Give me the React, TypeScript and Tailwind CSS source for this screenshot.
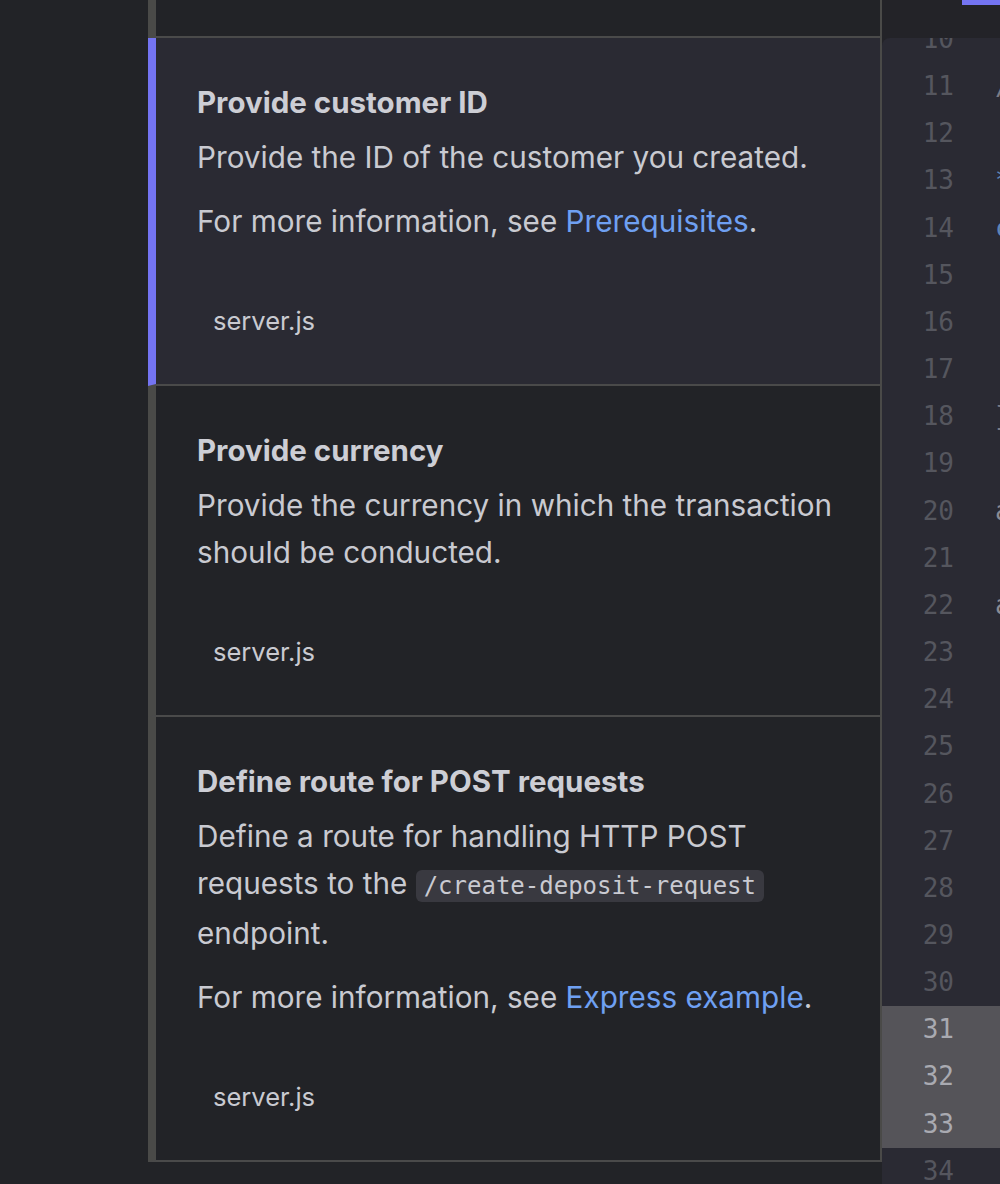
import React from "react";

type Step = {
  title: string;
  body: React.ReactNode[];
  active?: boolean;
};

const steps: Step[] = [
  {
    title: "Provide customer ID",
    active: true,
    body: [
      "Provide the ID of the customer you created.",
      <>
        For more information, see{" "}
        <span className="text-[#6fa0f2]">Prerequisites</span>.
      </>,
    ],
  },
  {
    title: "Provide currency",
    body: ["Provide the currency in which the transaction should be conducted."],
  },
  {
    title: "Define route for POST requests",
    body: [
      <>
        Define a route for handling HTTP POST requests to the{" "}
        <code className="rounded-md bg-[#393940] px-2 py-[2px] font-['DejaVu_Sans_Mono',monospace] text-[24px] text-[#c9cad1]">
          /create-deposit-request
        </code>{" "}
        endpoint.
      </>,
      <>
        For more information, see{" "}
        <span className="text-[#6fa0f2]">Express example</span>.
      </>,
    ],
  },
];

// first visible char of each code line only, the rest is clipped
const codeLines: { n: number; text: string; color: string }[] = [
  { n: 10, text: "", color: "" },
  { n: 11, text: "// Replace with your customer ID", color: "text-[#7a7b85]" },
  { n: 12, text: "", color: "" },
  { n: 13, text: "* customerId", color: "text-[#5f84b8]" },
  { n: 14, text: "const currency = 'USD';", color: "text-[#5f84b8]" },
  { n: 15, text: "", color: "" },
  { n: 16, text: "", color: "" },
  { n: 17, text: "", color: "" },
  { n: 18, text: "});", color: "text-[#7a7b85]" },
  { n: 19, text: "", color: "" },
  { n: 20, text: "app.use(express.json());", color: "text-[#8a8b94]" },
  { n: 21, text: "", color: "" },
  { n: 22, text: "app.post('/create-deposit-request')", color: "text-[#8a8b94]" },
  { n: 23, text: "", color: "" },
  { n: 24, text: "", color: "" },
  { n: 25, text: "", color: "" },
  { n: 26, text: "", color: "" },
  { n: 27, text: "", color: "" },
  { n: 28, text: "", color: "" },
  { n: 29, text: "", color: "" },
  { n: 30, text: "", color: "" },
  { n: 31, text: "", color: "" },
  { n: 32, text: "", color: "" },
  { n: 33, text: "", color: "" },
  { n: 34, text: "", color: "" },
];

function StepCard({ step }: { step: Step }) {
  return (
    <div
      className={
        step.active
          ? "border-l-8 border-b-2 border-l-[#7474f2] border-b-[#4a4a4a] bg-[#2a2a33] px-[41px] pt-[44px] pb-[43px]"
          : "border-l-8 border-b-2 border-l-[#4a4a48] border-b-[#4a4a4a] bg-[#222327] px-[41px] pt-[44px] pb-[43px]"
      }
    >
      <h2 className="text-[29.5px] font-bold leading-[40px] text-[#cdced5]">
        {step.title}
      </h2>

      <div className="mt-3 flex flex-col gap-[17px] text-[29.7px] leading-[47px] text-[#c9cad1]">
        {step.body.map((p, i) => (
          <p key={i}>{p}</p>
        ))}
      </div>

      <div className="mt-[56px] pl-4 text-[25.5px] leading-[40px] text-[#c9cad1]">
        server.js
      </div>
    </div>
  );
}

export default function App() {
  return (
    <main className="flex min-h-[1184px] bg-[#222327] font-['Inter',sans-serif]">

      <div className="w-[148px] shrink-0" />

      {/* STEPS */}

      <div className="flex w-[734px] shrink-0 flex-col self-start border-r-2 border-[#4a4a48]">
        <div className="h-[38px] border-l-8 border-b-2 border-l-[#4a4a48] border-b-[#4a4a4a] bg-[#222327]" />
        {steps.map((s) => (
          <StepCard key={s.title} step={s} />
        ))}
      </div>

      {/* CODE PANE */}

      <div className="flex min-w-0 flex-1 flex-col bg-[#232328]">
        <div className="flex h-[38px] justify-end">
          <div className="h-[5px] w-[38px] bg-[#7474f2]" />
        </div>

        <div className="flex-1 overflow-hidden rounded-tl-[8px] bg-[#2a2a33]">
          <div className="-mt-[22px] font-['DejaVu_Sans_Mono',monospace] text-[26px] leading-[47.15px]">
            {codeLines.map((l) => {
              const hl = l.n >= 31 && l.n <= 33;
              return (
                <div
                  key={l.n}
                  className={
                    hl
                      ? "flex whitespace-nowrap bg-[#555459]"
                      : "flex whitespace-nowrap"
                  }
                >
                  <span
                    className={
                      hl
                        ? "w-[72px] shrink-0 text-right text-[#a9aab1]"
                        : "w-[72px] shrink-0 text-right text-[#55565e]"
                    }
                  >
                    {l.n}
                  </span>
                  <span className={"pl-[41px] " + (l.color || "text-[#8a8b94]")}>
                    {l.text}
                  </span>
                </div>
              );
            })}
          </div>
        </div>
      </div>

    </main>
  );
}
